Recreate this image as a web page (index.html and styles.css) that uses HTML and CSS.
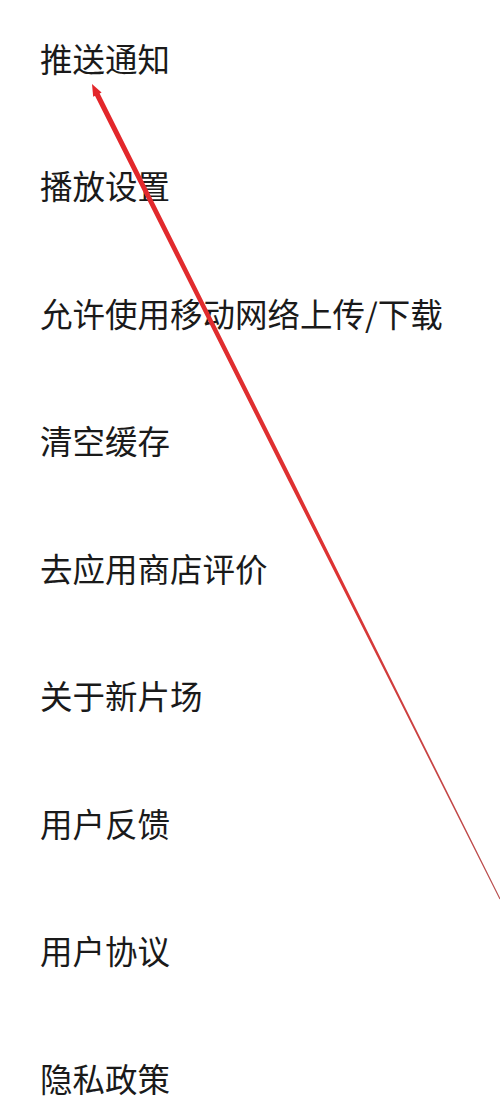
FILE: index.html
```html
<!DOCTYPE html>
<html lang="zh-CN">
<head>
<meta charset="utf-8">
<title>设置</title>
<link rel="stylesheet" href="styles.css">
</head>
<body>
<main class="page">
  <ul class="settings">
    <li class="row">推送通知</li>
    <li class="row">播放设置</li>
    <li class="row">允许使用移动网络上传/下载</li>
    <li class="row">清空缓存</li>
    <li class="row">去应用商店评价</li>
    <li class="row">关于新片场</li>
    <li class="row">用户反馈</li>
    <li class="row">用户协议</li>
    <li class="row">隐私政策</li>
  </ul>
  <svg class="annotation" width="500" height="1113" viewBox="0 0 500 1113" aria-hidden="true">
    <defs>
      <linearGradient id="stroke" x1="93" y1="86" x2="500" y2="899" gradientUnits="userSpaceOnUse">
        <stop offset="0" stop-color="#e3262a"/>
        <stop offset="0.6" stop-color="#dd3333"/>
        <stop offset="1" stop-color="#b85050"/>
      </linearGradient>
    </defs>
    <polygon fill="url(#stroke)" points="98.3,90.8 292.1,479.1 401.3,699.55 500.5,898.7 499.5,899.3 399.5,700.45 288.5,480.9 93.7,93.2"/>
    <polygon fill="#e3262a" points="92,84 101.6,92.6 93.2,96.8"/>
  </svg>
</main>
</body>
</html>
```
FILE: styles.css
```css
html, body {
  margin: 0;
  padding: 0;
  background: #ffffff;
}

.page {
  position: relative;
  width: 500px;
  height: 1113px;
  overflow: hidden;
}

.settings {
  list-style: none;
  margin: -6px 0 0 0;
  padding: 0;
}

.row {
  display: flex;
  align-items: center;
  height: 127.5px;
  padding-left: 40px;
  font-family: "Noto Sans CJK SC", "Noto Sans", sans-serif;
  font-size: 32.5px;
  line-height: 1;
  color: #1a1a1a;
}

.annotation {
  position: absolute;
  left: 0;
  top: 0;
  pointer-events: none;
}
```
